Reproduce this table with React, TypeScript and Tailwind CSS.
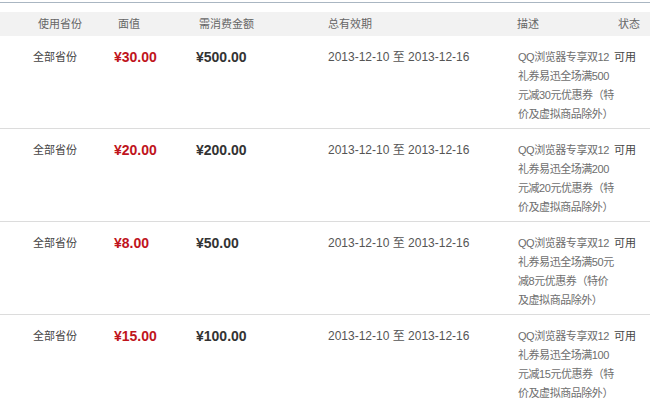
import React from 'react';

const rows = [
  {
    value: '¥30.00',
    need: '¥500.00',
    desc: ['QQ浏览器专享双12', '礼券易迅全场满500', '元减30元优惠券（特', '价及虚拟商品除外）'],
  },
  {
    value: '¥20.00',
    need: '¥200.00',
    desc: ['QQ浏览器专享双12', '礼券易迅全场满200', '元减20元优惠券（特', '价及虚拟商品除外）'],
  },
  {
    value: '¥8.00',
    need: '¥50.00',
    desc: ['QQ浏览器专享双12', '礼券易迅全场满50元', '减8元优惠券（特价', '及虚拟商品除外）'],
  },
  {
    value: '¥15.00',
    need: '¥100.00',
    desc: ['QQ浏览器专享双12', '礼券易迅全场满100', '元减15元优惠券（特', '价及虚拟商品除外）'],
  },
];

const grid = 'grid grid-cols-[114px_82px_132px_190px_95px_1fr]';

export default function App() {
  return (
    <div
      className="w-[650px] h-[405px] overflow-hidden bg-white text-[11px] text-[#333]"
      style={{ fontFamily: '"Liberation Sans", "Noto Sans CJK SC", sans-serif' }}
    >
      <div className="mt-[2px] border-t border-[#aab6c2] pt-[9px]">
        {/* Header */}
        <div className={`${grid} h-[24px] items-center bg-[#f2f2f2] text-[#666]`}>
          <div className="pl-[38px]">使用省份</div>
          <div className="pl-[4px]">面值</div>
          <div className="pl-[3px]">需消费金额</div>
          <div>总有效期</div>
          <div className="-ml-[1px]">描述</div>
          <div className="pl-[5px]">状态</div>
        </div>

        {/* Rows */}
        {rows.map((r, i) => (
          <div key={i} className={`${grid} h-[93px] items-start border-b border-[#dcdcdc] pt-[12px] leading-[19px]`}>
            <div className="pl-[33px] text-[#444]">全部省份</div>
            <div className="text-[14px] font-bold text-[#c0141c]">{r.value}</div>
            <div className="text-[14px] font-bold text-[#333]">{r.need}</div>
            <div className="text-[12px] text-[#555]">2013-12-10 至 2013-12-16</div>
            <div className="whitespace-nowrap tracking-[-0.45px] text-[#6e6e6e]">
              {r.desc.map((line, j) => (
                <div key={j}>{line}</div>
              ))}
            </div>
            <div className="pl-[1px] text-[#444]">可用</div>
          </div>
        ))}
      </div>
    </div>
  );
}
